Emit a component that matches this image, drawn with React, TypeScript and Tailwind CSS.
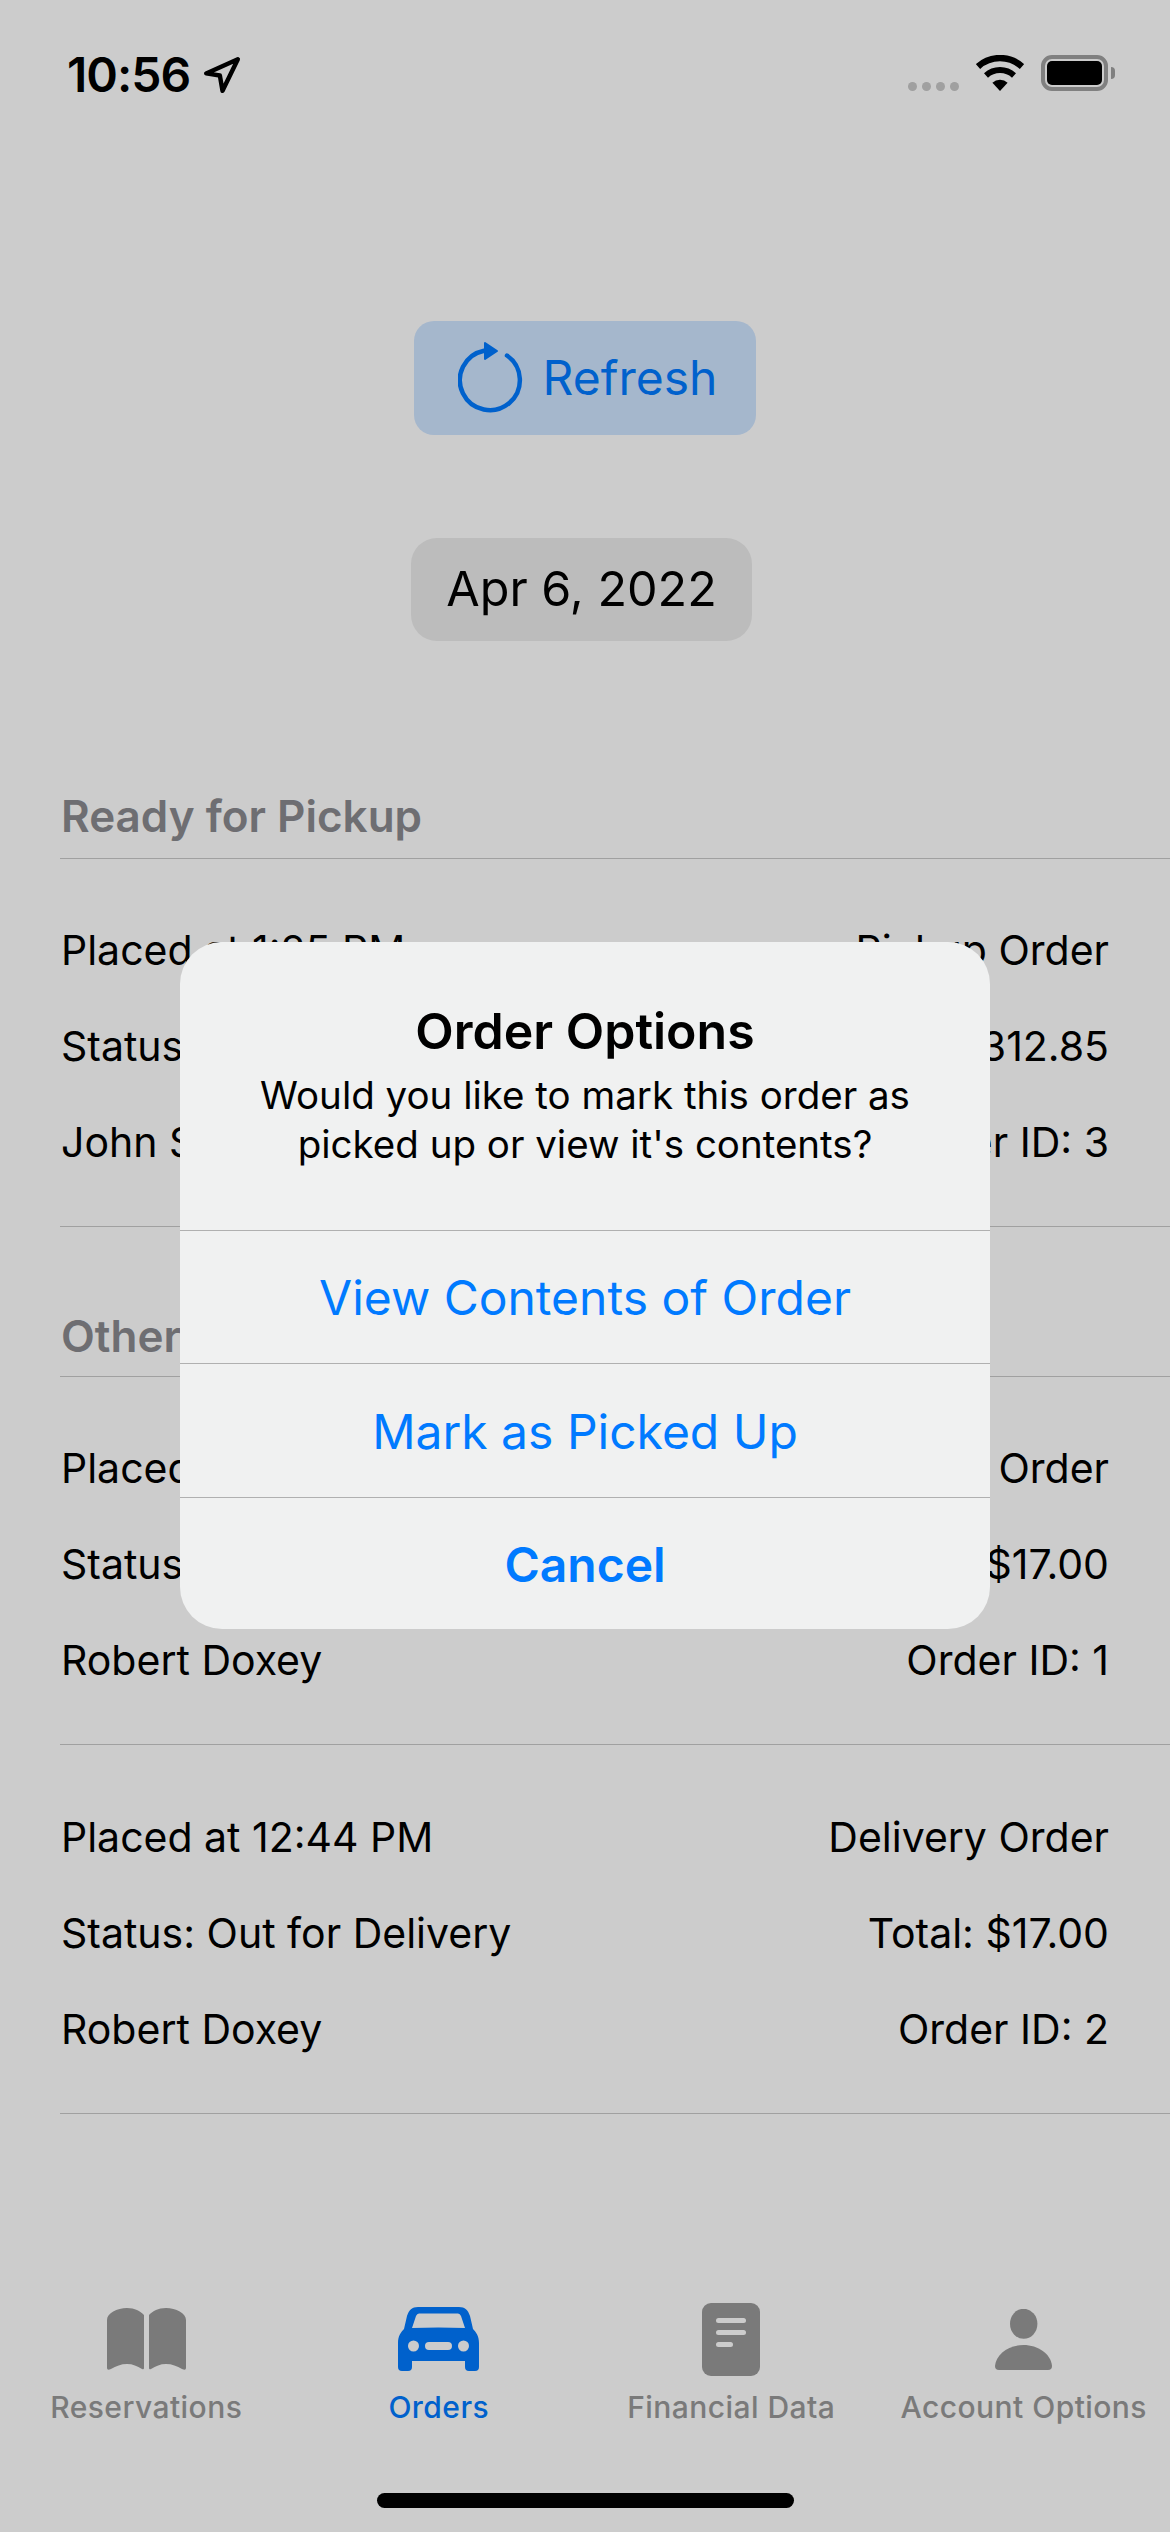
const FONT = 'font-["Inter","Liberation_Sans",sans-serif]';

function Wifi() {
  return (
    <svg width="48" height="36" viewBox="0 0 48 36" fill="none">
      <path d="M2 11.5A33 33 0 0 1 46 11.5" stroke="#000" strokeWidth="6.5" />
      <path d="M10 20.4A21 21 0 0 1 38 20.4" stroke="#000" strokeWidth="6" />
      <path d="M24 36L16.4 27.8A11 11 0 0 1 31.6 27.8Z" fill="#000" />
    </svg>
  );
}

function Battery() {
  return (
    <div className="flex items-center gap-[3px]">
      <div className="w-[67px] h-[36px] rounded-[11px] border-[4px] border-[#a0a0a0] p-[2px]">
        <div className="w-full h-full rounded-[5px] bg-black" />
      </div>
      <div className="w-[4px] h-[12px] rounded-r-full bg-[#a0a0a0]" />
    </div>
  );
}

function StatusBar() {
  return (
    <div className="h-[321px] shrink-0 flex items-start justify-between pl-[67px] pr-[55px] pt-[55px]">
      <div className="flex items-center gap-[13px] h-[40px]">
        <span className="text-[48px] font-semibold leading-none text-black tracking-[-1px]">10:56</span>
        <svg width="38" height="38" viewBox="0 0 36 36" fill="none">
          <path d="M33 3L3 16.5L16 18.5L18.5 33Z" stroke="#000" strokeWidth="4.2" strokeLinejoin="round" />
        </svg>
      </div>
      <div className="flex items-end gap-[17px]">
        <div className="flex gap-[5px]">
          {[0, 1, 2, 3].map((i) => (
            <div key={i} className="w-[9px] h-[9px] rounded-full bg-[#c8c8c8]" />
          ))}
        </div>
        <Wifi />
        <Battery />
      </div>
    </div>
  );
}

function RefreshIcon() {
  return (
    <svg width="66" height="72" viewBox="0 0 66 72" fill="none">
      <path d="M49 13.5A30 30 0 1 1 26 8.7" stroke="#007aff" strokeWidth="4.5" strokeLinecap="round" />
      <path d="M27 1L39 9L27 17Z" fill="#007aff" stroke="#007aff" strokeWidth="2" strokeLinejoin="round" />
    </svg>
  );
}

function SectionHeader({ title, height, bottom }: { title: string; height: string; bottom: string }) {
  return (
    <div className={`${height} ${bottom} flex items-end pl-[61px]`}>
      <h2 className="text-[44px] leading-[50px] font-semibold text-[#8a8a8f]">{title}</h2>
    </div>
  );
}

function OrderBlock({
  rows,
  height = 'h-[368px]',
  top = 'pt-[44px]',
}: {
  rows: [string, string][];
  height?: string;
  top?: string;
}) {
  return (
    <div className={`ml-[60px] ${height} ${top} border-b border-[#c8c8c8]`}>
      {rows.map(([left, right]) => (
        <div key={left} className="h-[96px] flex items-center justify-between pl-px pr-[61px] text-[41px] text-black">
          <span>{left}</span>
          <span>{right}</span>
        </div>
      ))}
    </div>
  );
}

function BookIcon() {
  const page = 'M0 12C0 5 10 0 20 0C28 0 33 3 37 7V60Q37 62 35 61C30 58 26 56 20 56C14 56 9 58 4 61Q0 63 0 60Z';
  return (
    <svg width="79" height="63" viewBox="0 0 79 63" fill="#999999">
      <path d={page} />
      <path d={page} transform="translate(79 0) scale(-1 1)" />
    </svg>
  );
}

function CarIcon() {
  return (
    <svg width="81" height="64" viewBox="0 0 81 64" fill="#007aff" fillRule="evenodd">
      <path d="M20 0H61C67 0 70 3 72 9L75 22C78 25 81 29 81 36V60Q81 64 77 64H71Q67 64 67 60V54H14V60Q14 64 10 64H4Q0 64 0 60V36C0 29 3 25 6 22L9 9C11 3 14 0 20 0ZM21 6.5Q19 6.5 18 9L14 21Q40 20 67 21L63 9Q62 6.5 60 6.5ZM15.5 33.5A5.5 5.5 0 1 0 15.5 44.5A5.5 5.5 0 1 0 15.5 33.5ZM65.5 33.5A5.5 5.5 0 1 0 65.5 44.5A5.5 5.5 0 1 0 65.5 33.5ZM31 35Q27 35 27 39Q27 43 31 43H50Q54 43 54 39Q54 35 50 35Z" />
    </svg>
  );
}

function DocIcon() {
  return (
    <svg width="58" height="73" viewBox="0 0 58 73">
      <rect width="58" height="73" rx="9" fill="#999999" />
      <rect x="14" y="15" width="30" height="5" rx="2.5" fill="#fff" />
      <rect x="14" y="27" width="30" height="5" rx="2.5" fill="#fff" />
      <rect x="14" y="39" width="17" height="5" rx="2.5" fill="#fff" />
    </svg>
  );
}

function PersonIcon() {
  return (
    <svg width="57" height="61" viewBox="0 0 57 61" fill="#999999">
      <ellipse cx="28.7" cy="14.8" rx="13.7" ry="15" />
      <path d="M0 57C1 45 14 36 28.5 36C43 36 56 45 57 57Q57 61 53 61H4Q0 61 0 57Z" />
    </svg>
  );
}

const tabs = [
  { label: 'Reservations', icon: <BookIcon />, active: false },
  { label: 'Orders', icon: <CarIcon />, active: true },
  { label: 'Financial Data', icon: <DocIcon />, active: false },
  { label: 'Account Options', icon: <PersonIcon />, active: false },
];

function TabBar() {
  return (
    <div className="mt-auto h-[239px] shrink-0 flex flex-col">
      <div className="grid grid-cols-4 pt-[7px]">
        {tabs.map((tab) => (
          <div key={tab.label} className="flex flex-col items-center">
            <div className="h-[78px] flex items-center justify-center">{tab.icon}</div>
            <span
              className={`mt-[11px] text-[30px] leading-[36px] font-medium tracking-[0.45px] ${tab.active ? 'text-[#007aff]' : 'text-[#999999]'}`}
            >
              {tab.label}
            </span>
          </div>
        ))}
      </div>
      <div className="mt-auto mb-[24px] mx-auto w-[417px] h-[15px] rounded-full bg-black" />
    </div>
  );
}

function Dialog() {
  const button = 'flex items-center justify-center pt-[2px] border-t border-[#b0b0b0] text-[#007aff] text-[48px]';
  return (
    <div className="absolute inset-0 bg-black/20 flex justify-center items-start pt-[942px]">
      <div className="w-[810px] h-[687px] rounded-[42px] bg-[#f0f1f1] flex flex-col overflow-hidden">
        <div className="h-[288px] shrink-0 flex flex-col items-center pt-[64px] text-center text-black">
          <h3 className="text-[50px] leading-[50px] font-semibold">Order Options</h3>
          <p className="mt-[15px] text-[38.5px] leading-[49px]">
            Would you like to mark this order as
            <br />
            picked up or view it's contents?
          </p>
        </div>
        <div className={`h-[133px] ${button}`}>View Contents of Order</div>
        <div className={`h-[134px] ${button}`}>Mark as Picked Up</div>
        <div className={`flex-1 font-semibold ${button}`}>Cancel</div>
      </div>
    </div>
  );
}

export default function App() {
  return (
    <div className={`relative w-[1170px] h-[2532px] bg-white overflow-hidden flex flex-col ${FONT}`}>
      <StatusBar />
      <div className="flex flex-col items-center">
        <button className="w-[342px] h-[114px] rounded-[20px] bg-[#cfe5ff] flex items-center justify-center gap-[19px] pl-[5px] text-[#007aff] text-[48px]">
          <RefreshIcon />
          <span>Refresh</span>
        </button>
        <div className="mt-[103px] -ml-[7px] w-[341px] h-[103px] rounded-[26px] bg-[#ececec] flex items-center justify-center text-[48.5px] text-black">
          Apr 6, 2022
        </div>
      </div>

      <SectionHeader title="Ready for Pickup" height="h-[217px]" bottom="pb-[17px]" />
      <div className="ml-[60px] border-t border-[#c8c8c8]" />
      <OrderBlock
        rows={[
          ['Placed at 1:25 PM', 'Pickup Order'],
          ['Status: Ready', 'Total: $312.85'],
          ['John Smith', 'Order ID: 3'],
        ]}
      />

      <SectionHeader title="Other Orders" height="h-[149px]" bottom="pb-[15px]" />
      <div className="ml-[60px] border-t border-[#c8c8c8]" />
      <OrderBlock
        rows={[
          ['Placed at 12:40 PM', 'Delivery Order'],
          ['Status: Preparing', 'Total: $17.00'],
          ['Robert Doxey', 'Order ID: 1'],
        ]}
      />
      <OrderBlock
        height="h-[369px]"
        top="pt-[45px]"
        rows={[
          ['Placed at 12:44 PM', 'Delivery Order'],
          ['Status: Out for Delivery', 'Total: $17.00'],
          ['Robert Doxey', 'Order ID: 2'],
        ]}
      />

      <TabBar />
      <Dialog />
    </div>
  );
}
